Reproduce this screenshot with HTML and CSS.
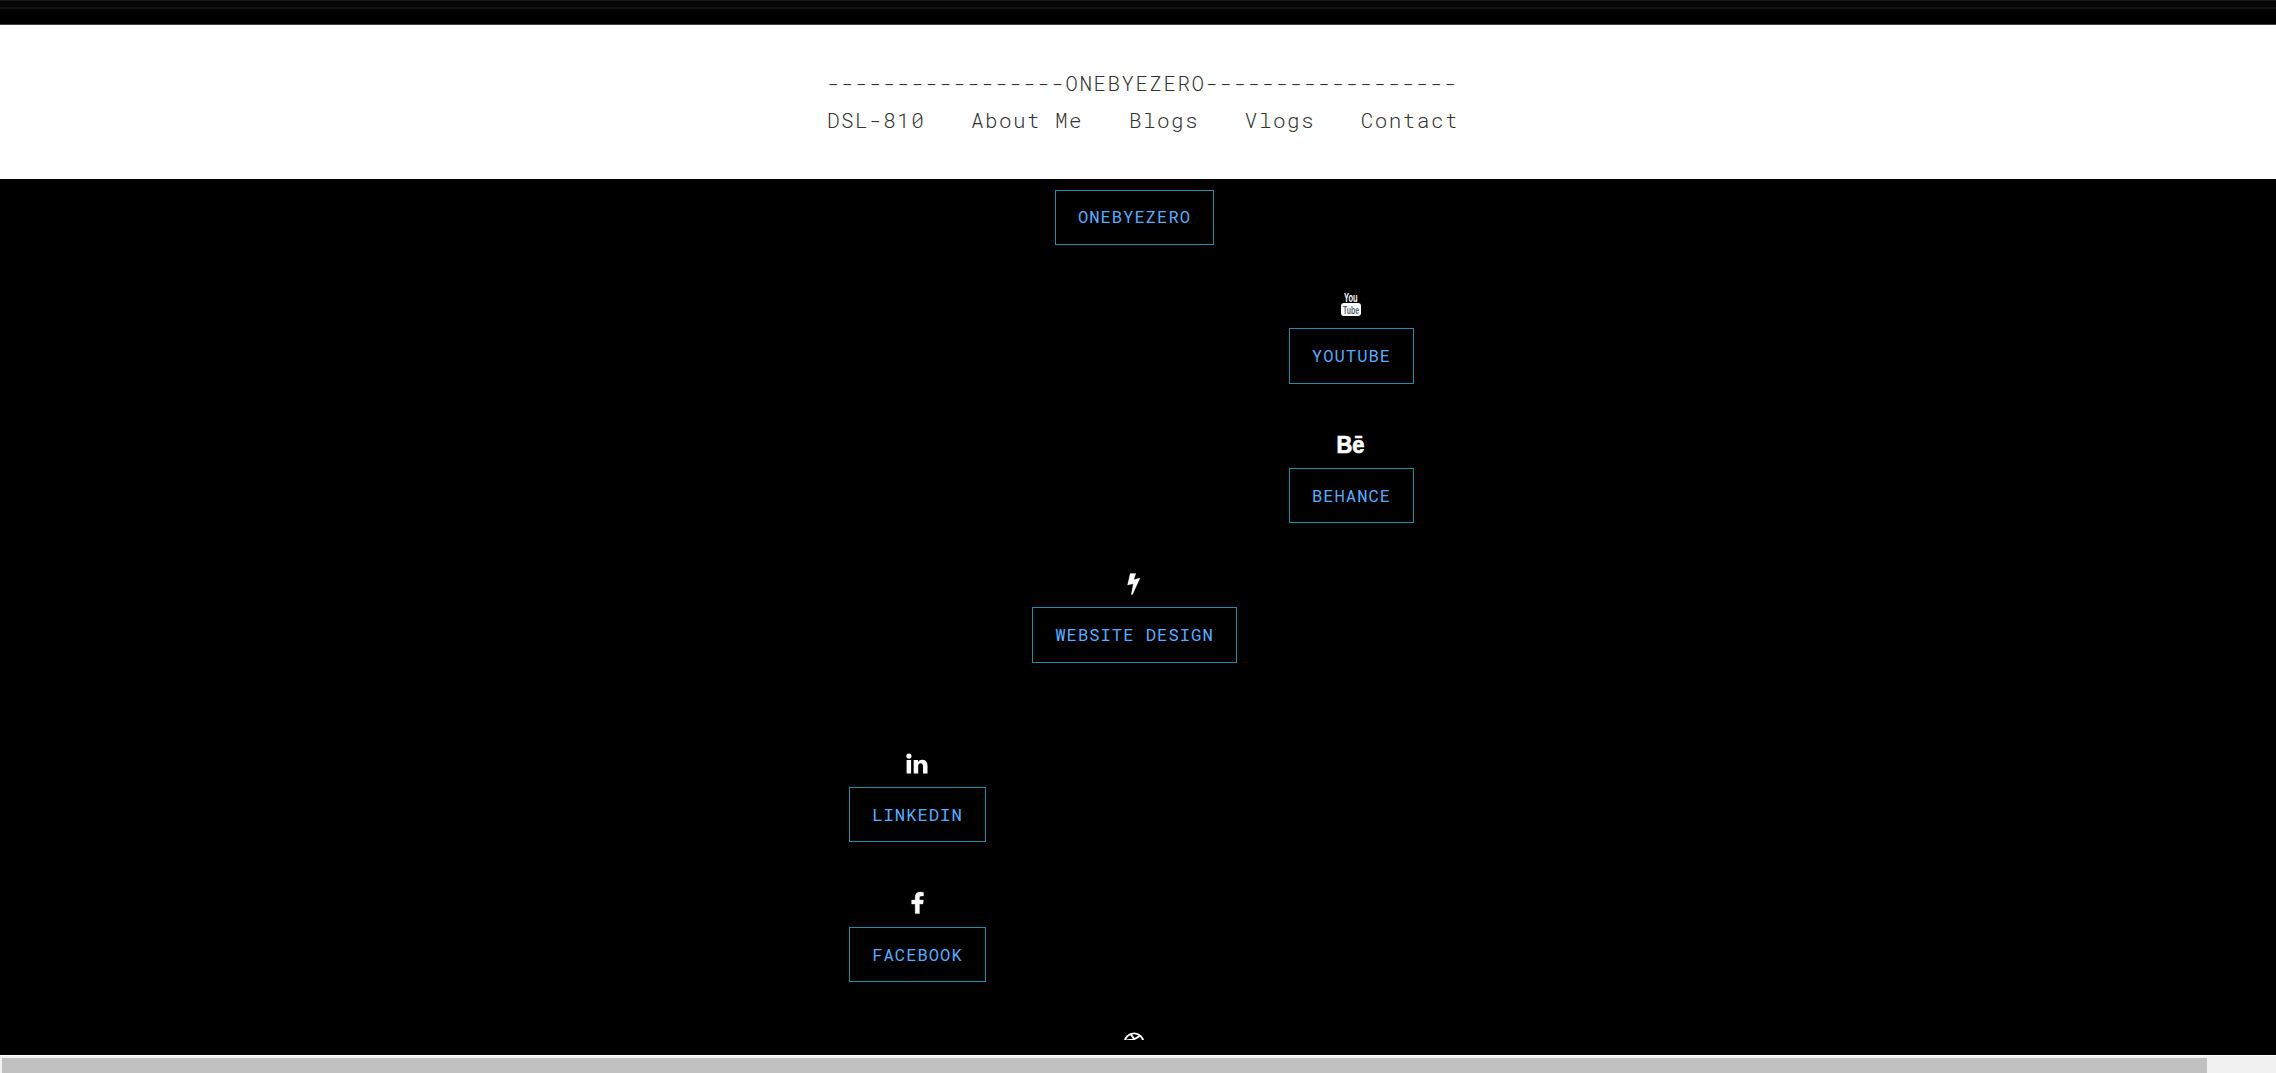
FILE: index.html
```html
<!DOCTYPE html>
<html lang="en">
<head>
<meta charset="utf-8">
<title>ONEBYEZERO</title>
<link rel="stylesheet" href="styles.css">
</head>
<body>
<div class="topbar"></div>
<header class="header">
  <div class="menu">
    <div class="brand">-----------------ONEBYEZERO------------------</div>
    <nav class="nav"><a>DSL-810</a><a>About Me</a><a>Blogs</a><a>Vlogs</a><a>Contact</a></nav>
  </div>
</header>
<main class="links">
  <div class="item center first"><a class="button">ONEBYEZERO</a></div>
  <div class="item right">
    <svg class="icon" width="20" height="24" viewBox="0 0 20 24">
      <text x="3" y="10" font-size="12" textLength="13.5" lengthAdjust="spacingAndGlyphs" fill="#fff">You</text>
      <rect x="0" y="11" width="20" height="13" rx="3" fill="#fff"/>
      <text x="2" y="21.5" font-size="11" textLength="16" lengthAdjust="spacingAndGlyphs" fill="#567">Tube</text>
    </svg>
    <a class="button">YOUTUBE</a>
  </div>
  <div class="item right">
    <svg class="icon" width="30" height="24" viewBox="0 0 30 24">
      <text x="0.5" y="20.5" font-size="23" textLength="28" lengthAdjust="spacingAndGlyphs" fill="#fff" stroke="#fff" stroke-width=".7">Bē</text>
    </svg>
    <a class="button">BEHANCE</a>
  </div>
  <div class="item center">
    <svg class="icon" width="14" height="24" viewBox="0 0 14 24"><path fill="#fff" stroke="#fff" stroke-width=".3" d="M3.2 2.5H8.8L6.7 8.7L13 7.1L5.5 23.5H4.3L6.3 12.7L.6 14.1Z"/></svg>
    <a class="button">WEBSITE DESIGN</a>
  </div>
  <div class="item left apart">
    <svg class="icon" width="22" height="24" viewBox="0 0 22 24"><circle cx="2.9" cy="5.1" r="2.6" fill="#fff"/><path fill="#fff" d="M.6 9H5.1V22.5H.6ZM7.7 9H12V10.9C12.9 9.5 14.3 8.7 16.2 8.7C19.5 8.7 21.5 10.8 21.5 14.7V22.5H17V15.3C17 13.4 16.3 12.3 14.8 12.3C13 12.3 12.2 13.6 12.2 15.2V22.5H7.7Z"/></svg>
    <a class="button">LINKEDIN</a>
  </div>
  <div class="item left">
    <svg class="icon" width="13" height="24" viewBox="0 0 13 24"><path fill="#fff" stroke="#fff" stroke-width=".4" d="M12.5 2.4V6H10.3C8.7 6 8.4 6.7 8.4 7.9V10.1H12.4L11.9 14H8.4V23.6H4.2V14H.7V10.1H4.2V7.3C4.2 3.9 6.3 2.1 9.4 2.1Z"/></svg>
    <a class="button">FACEBOOK</a>
  </div>
  <div class="item center cut">
    <svg class="icon" width="22" height="24" viewBox="0 0 22 24"><g fill="none" stroke="#fff" stroke-width="1.9"><circle cx="11" cy="12.8" r="9.4"/><path d="M2 10.4Q11.5 10.8 17 5.5M7.6 4.2Q13.5 11.3 14.5 21.3M20.3 13.8Q11 10.8 4.7 19.8"/></g></svg>
  </div>
</main>
<div class="scrollbar"><div class="thumb"></div></div>
</body>
</html>
```
FILE: styles.css
```css
* { box-sizing: border-box; }
body {
  margin: 0;
  height: 1073px;
  overflow: hidden;
  display: flex;
  flex-direction: column;
  background: #000;
  font-family: "Roboto Mono", "Liberation Mono", monospace;
}
.topbar {
  height: 9px;
  flex: none;
  margin-bottom: 15px;
  background: #050505;
  border-top: 1px solid #181818;
  border-bottom: 2px solid #141414;
}
.header {
  flex: none;
  height: 155px;
  padding: 40px 0 0 9px;
  background: #fff;
  border-top: 1px solid #444;
  display: flex;
  justify-content: center;
}
.menu {
  width: 631px;
  font-size: 21px;
  font-weight: 300;
  line-height: 36.6px;
  letter-spacing: 1.42px;
  color: #333;
}
.brand, .nav { white-space: nowrap; }
.nav { display: flex; gap: 45.8px; }
.links {
  flex: none;
  width: 651px;
  height: 862px;
  margin-left: 809px;
  padding-top: 11px;
  display: flex;
  flex-direction: column;
  gap: 48px;
}
.item {
  flex: none;
  width: 217px;
  height: 91.6px;
  display: flex;
  flex-direction: column;
  align-items: center;
  gap: 12.2px;
}
.left { align-self: flex-start; }
.center { align-self: center; }
.right { align-self: flex-end; }
.first { height: 55px; margin-bottom: -1px; }
.first .button { height: 54.5px; line-height: 52px; }
.apart { margin-top: 40px; }
.cut { height: 10px; overflow: hidden; }
.icon {
  flex: none;
  display: block;
  overflow: visible;
  margin-left: -1px;
  font-family: "Liberation Sans", sans-serif;
  font-weight: 700;
}
.button {
  flex: none;
  height: 55.4px;
  padding: 0 22px;
  border: 1px solid #248aa5;
  font-size: 17.2px;
  font-weight: 400;
  line-height: 53px;
  letter-spacing: 1px;
  color: #58acff;
  white-space: nowrap;
}
.scrollbar {
  flex: none;
  height: 18px;
  padding: 2px 0 0 2px;
  margin-top: 14px;
  background: #f1f1f1;
  border-top: 1px solid #fff;
}
.thumb { width: 2205px; height: 15px; background: #c1c1c1; }
```
